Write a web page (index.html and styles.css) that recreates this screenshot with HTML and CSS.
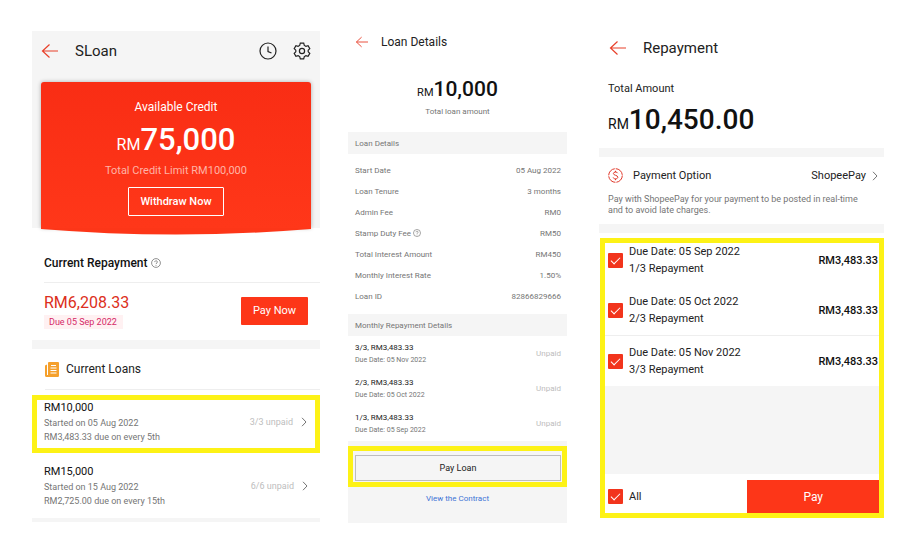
FILE: index.html
```html
<!DOCTYPE html>
<html lang="en">

<head>
  <meta charset="UTF-8">
  <meta name="viewport" content="width=device-width, initial-scale=1.0">
  <title>SLoan</title>
  <link rel="stylesheet" href="styles.css">
</head>

<body>
  <main class="screens">

    <!-- SLoan home -->
    <section class="screen home">
      <div class="hero">
        <header class="topbar">
          <button class="icon-btn" aria-label="Back">
            <svg class="back" viewBox="0 0 18 16"><path d="M8.5 1.5 1.5 8l7 6.5M1.5 8H17" /></svg>
          </button>
          <h1>SLoan</h1>
          <button class="icon-btn" aria-label="History">
            <svg class="tool" viewBox="0 0 18 18"><circle cx="9" cy="9" r="8" /><path d="M9 4.5V9.5l3.5 1.5" /></svg>
          </button>
          <button class="icon-btn" aria-label="Settings">
            <svg class="tool" viewBox="0 0 18 18"><path d="M7.3 1.2h3.4l.6 2.2 1.6.9 2.2-.6 1.7 2.9-1.6 1.6v1.6l1.6 1.6-1.7 2.9-2.2-.6-1.6.9-.6 2.2H7.3l-.6-2.2-1.6-.9-2.2.6-1.7-2.9 1.6-1.6V8.2L1.2 6.6l1.7-2.9 2.2.6 1.6-.9z" /><circle cx="9" cy="9" r="2.6" /></svg>
          </button>
        </header>
        <div class="credit">
          <p class="credit-label">Available Credit</p>
          <p class="credit-amount"><small>RM</small>75,000</p>
          <p class="credit-limit">Total Credit Limit RM100,000</p>
          <button class="withdraw">Withdraw Now</button>
        </div>
      </div>
      <svg class="curve" viewBox="0 0 270 7" preserveAspectRatio="none"><path d="M0 0h270v1Q135 12 0 1z" /></svg>

      <h2 class="repay-title">Current Repayment
        <svg class="help" viewBox="0 0 10 10"><circle cx="5" cy="5" r="4.4" /><path d="M3.7 4.1c0-1.8 2.7-1.7 2.7-.1C6.4 5 5 5 5 6.1M5 7v.8" /></svg>
      </h2>
      <div class="repay">
        <div>
          <p class="repay-amount">RM6,208.33</p>
          <span class="due">Due 05 Sep 2022</span>
        </div>
        <button class="pay-now">Pay Now</button>
      </div>
      <div class="divider"></div>

      <h2 class="loans-title">
        <svg class="book" viewBox="0 0 14 15"><path class="book-bg" d="M0 3.500 2 2.500v10.500h11.500v2H1.500Q0 15 0 13.500z" /><rect class="book-bg" x="3" y="0" width="11" height="14.500" rx="1" /><path class="book-line" d="M6 3.500h5M5.500 6h6M5.500 8.500h6M5.500 11h6" /></svg>
        Current Loans
      </h2>
      <a class="loan marked" href="#">
        <span class="loan-info"><b>RM10,000</b>Started on 05 Aug 2022<br>RM3,483.33 due on every 5th</span>
        <span class="loan-state">3/3 unpaid</span>
        <svg class="chevron" viewBox="0 0 6 10"><path d="m1 .8 4 4.200-4 4.200" /></svg>
      </a>
      <a class="loan" href="#">
        <span class="loan-info"><b>RM15,000</b>Started on 15 Aug 2022<br>RM2,725.00 due on every 15th</span>
        <span class="loan-state">6/6 unpaid</span>
        <svg class="chevron" viewBox="0 0 6 10"><path d="m1 .8 4 4.200-4 4.200" /></svg>
      </a>
      <div class="divider thin"></div>
    </section>

    <!-- Loan details -->
    <section class="screen details">
      <header class="topbar">
        <button class="icon-btn" aria-label="Back">
          <svg class="back" viewBox="0 0 18 16"><path d="M8.5 1.5 1.5 8l7 6.5M1.5 8H17" /></svg>
        </button>
        <h1>Loan Details</h1>
      </header>
      <p class="total"><small>RM</small>10,000</p>
      <p class="total-label">Total loan amount</p>

      <h2 class="bar">Loan Details</h2>
      <dl class="facts">
        <div><dt>Start Date</dt><dd>05 Aug 2022</dd></div>
        <div><dt>Loan Tenure</dt><dd>3 months</dd></div>
        <div><dt>Admin Fee</dt><dd>RM0</dd></div>
        <div>
          <dt>Stamp Duty Fee
            <svg class="help" viewBox="0 0 10 10"><circle cx="5" cy="5" r="4.4" /><path d="M3.7 4.1c0-1.8 2.7-1.7 2.7-.1C6.4 5 5 5 5 6.1M5 7v.8" /></svg>
          </dt>
          <dd>RM50</dd>
        </div>
        <div><dt>Total Interest Amount</dt><dd>RM450</dd></div>
        <div><dt>Monthly Interest Rate</dt><dd>1.50%</dd></div>
        <div><dt>Loan ID</dt><dd>82866829666</dd></div>
      </dl>

      <h2 class="bar">Monthly Repayment Details</h2>
      <ul class="months">
        <li><span><b>3/3, RM3,483.33</b>Due Date: 05 Nov 2022</span><em>Unpaid</em></li>
        <li><span><b>2/3, RM3,483.33</b>Due Date: 05 Oct 2022</span><em>Unpaid</em></li>
        <li><span><b>1/3, RM3,483.33</b>Due Date: 05 Sep 2022</span><em>Unpaid</em></li>
      </ul>
      <footer class="actions">
        <div class="marked"><button class="pay-loan">Pay Loan</button></div>
        <a class="contract" href="#">View the Contract</a>
      </footer>
    </section>

    <!-- Repayment -->
    <section class="screen repayment">
      <header class="topbar">
        <button class="icon-btn" aria-label="Back">
          <svg class="back" viewBox="0 0 18 16"><path d="M8.5 1.5 1.5 8l7 6.5M1.5 8H17" /></svg>
        </button>
        <h1>Repayment</h1>
      </header>
      <p class="amount-label">Total Amount</p>
      <p class="amount"><small>RM</small>10,450.00</p>
      <div class="divider"></div>

      <a class="option" href="#">
        <svg class="coin" viewBox="0 0 15 15"><circle cx="7.5" cy="7.5" r="6.8" stroke-dasharray="9.700 1" /><path d="M9.700 5.200C9.300 3.600 5.400 3.500 5.400 5.500c0 2.200 4.400 1.400 4.400 3.700 0 2.200-4.200 2.200-4.600.3M7.500 2.800v1.300M7.500 10.900v1.300" /></svg>
        <span class="option-name">Payment Option</span>
        <span>ShopeePay</span>
        <svg class="chevron" viewBox="0 0 6 10"><path d="m1 .8 4 4.200-4 4.200" /></svg>
      </a>
      <p class="note">Pay with ShopeePay for your payment to be posted in real-time and to avoid late charges.</p>
      <div class="divider"></div>

      <div class="marked picker">
        <label class="due-row">
          <input type="checkbox" class="check" checked>
          <span>Due Date: 05 Sep 2022<br>1/3 Repayment</span>
          <b>RM3,483.33</b>
        </label>
        <label class="due-row">
          <input type="checkbox" class="check" checked>
          <span>Due Date: 05 Oct 2022<br>2/3 Repayment</span>
          <b>RM3,483.33</b>
        </label>
        <label class="due-row">
          <input type="checkbox" class="check" checked>
          <span>Due Date: 05 Nov 2022<br>3/3 Repayment</span>
          <b>RM3,483.33</b>
        </label>
        <div class="blank"></div>
        <footer class="pay-bar">
          <label class="all"><input type="checkbox" class="check" checked>All</label>
          <button class="pay">Pay</button>
        </footer>
      </div>
    </section>

  </main>
</body>

</html>
```
FILE: styles.css
```css
:root {
  --red: #fd3618;
  --grey: #f5f5f5;
  --line: #eeeeee;
  --yellow: #fdf216;
  --text: #222222;
  --muted: #757575;
  --faint: #bdbdbd;
}

* {
  box-sizing: border-box;
}

body {
  margin: 0;
  background-color: white;
  color: var(--text);
  font-family: Roboto, "Liberation Sans", sans-serif;
  font-size: 11px;
}

h1,
h2,
p,
dl,
dd,
ul {
  margin: 0;
  padding: 0;
  font-weight: 400;
}

ul {
  list-style: none;
}

a {
  color: inherit;
  text-decoration: none;
}

button {
  padding: 0;
  border: none;
  background: none;
  font-family: inherit;
  cursor: pointer;
}

svg {
  display: block;
  flex: none;
  fill: none;
}

.screens {
  display: flex;
  align-items: flex-start;
  padding: 31px 20px 28px 32px;
}

.screen {
  min-width: 0;
}

.home {
  flex: 288 1 0;
}

.details {
  flex: 219 1 0;
  margin-left: 28px;
}

.repayment {
  flex: 285 1 0;
  margin-left: 32px;
}

/* shared parts */
.topbar {
  display: flex;
  align-items: center;
  gap: 16px;
}

.topbar h1 {
  flex: 1;
  font-size: 15px;
  line-height: 20px;
}

.back {
  width: 18px;
  height: 16px;
  stroke: #e8402a;
  stroke-width: 1.2;
}

.tool {
  width: 18px;
  height: 18px;
  stroke: #222222;
  stroke-width: 1.2;
}

.help {
  display: inline-block;
  width: 10px;
  height: 10px;
  stroke: var(--muted);
  stroke-width: 0.8;
  vertical-align: -1px;
}

.chevron {
  width: 6px;
  height: 10px;
  stroke: #757575;
}

.divider {
  height: 9px;
  background-color: var(--grey);
}

.divider.thin {
  height: 4px;
}

.marked {
  border: 5px solid var(--yellow);
}

/* home */
.hero {
  padding: 0 9px;
  background-color: var(--grey);
}

.hero .topbar {
  height: 51px;
  padding-bottom: 11px;
}

.credit {
  display: flex;
  flex-direction: column;
  align-items: center;
  padding: 16px 0 12px;
  border-radius: 3px 3px 0 0;
  background-color: var(--red);
  background-image: linear-gradient(#f92d14, #ff3719);
  box-shadow: 0 0 4px rgba(0, 0, 0, 0.3);
  color: white;
}

.credit-label {
  font-size: 12px;
  line-height: 18px;
}

.credit-amount {
  margin-top: 6px;
  font-size: 31px;
  font-weight: 500;
  line-height: 36px;
}

.credit-amount small {
  font-size: 16px;
  font-weight: 400;
}

.credit-limit {
  color: #ffb3a6;
  font-size: 11px;
  line-height: 16px;
}

.withdraw {
  width: 96px;
  height: 29px;
  margin-top: 8px;
  border: 1px solid white;
  border-radius: 1px;
  color: white;
  font-size: 11px;
  font-weight: 500;
}

.curve {
  width: calc(100% - 18px);
  height: 7px;
  margin: 0 9px;
  fill: #fd3618;
}

.repay-title {
  margin-left: 12px;
  padding: 19px 0 10px;
  border-bottom: 1px solid var(--line);
  color: #111111;
  font-size: 12px;
  font-weight: 500;
  line-height: 18px;
}

.repay {
  display: flex;
  align-items: center;
  justify-content: space-between;
  height: 57px;
  padding: 0 12px 2px;
}

.repay-amount {
  color: #dc2f20;
  font-size: 16px;
  line-height: 20px;
}

.due {
  display: block;
  width: fit-content;
  margin-top: 2px;
  padding: 0 6px 0 5px;
  background-color: #fff1f2;
  color: #d52a68;
  font-size: 9px;
  line-height: 14px;
}

.pay-now {
  width: 67px;
  height: 28px;
  border-radius: 1px;
  background-color: var(--red);
  color: white;
  font-size: 11px;
}

.loans-title {
  display: flex;
  align-items: center;
  gap: 7px;
  height: 41px;
  margin-left: 13px;
  border-bottom: 1px solid var(--line);
  font-size: 12px;
}

.book {
  width: 14px;
  height: 15px;
}

.book-bg {
  fill: #f5a02c;
}

.book-line {
  stroke: white;
}

.loan {
  display: flex;
  align-items: center;
  gap: 8px;
  margin-top: 5px;
  padding: 1px 12px 9px;
}

.loan.marked {
  padding: 0 8px 4px 7px;
}

.loan-info {
  flex: 1;
  color: var(--muted);
  font-size: 9px;
  line-height: 14px;
}

.loan-info b {
  display: block;
  color: #111111;
  font-size: 11px;
  font-weight: 400;
  line-height: 16px;
}

.loan + .loan {
  padding-top: 6px;
  padding-bottom: 10px;
}

.loan-state {
  color: var(--faint);
  font-size: 9px;
}

/* loan details */
.details .topbar {
  height: 21px;
  padding-left: 7px;
  gap: 12px;
}

.details .topbar h1 {
  font-size: 12px;
}

.details .back {
  width: 14px;
  height: 12px;
}

.total {
  padding-top: 25px;
  color: #111111;
  font-size: 21px;
  font-weight: 500;
  line-height: 24px;
  text-align: center;
}

.total small {
  font-size: 11px;
  font-weight: 400;
}

.total-label {
  padding-bottom: 13px;
  color: var(--muted);
  font-size: 8px;
  line-height: 14px;
  text-align: center;
}

.bar {
  padding: 2px 7px 0;
  background-color: var(--grey);
  color: var(--muted);
  font-size: 8px;
  line-height: 20px;
}

.facts {
  padding: 6px 6px 7px 7px;
  color: var(--muted);
  font-size: 8px;
  line-height: 21px;
}

.facts div {
  display: flex;
  justify-content: space-between;
}

.facts .help {
  width: 8px;
  height: 8px;
}

.months li {
  display: flex;
  align-items: center;
  justify-content: space-between;
  height: 35px;
  padding: 0 6px 0 7px;
  color: var(--muted);
  font-size: 7px;
  line-height: 12px;
}

.months b {
  display: block;
  color: var(--text);
  font-size: 8px;
  font-weight: 400;
}

.months em {
  color: var(--faint);
  font-size: 8px;
  font-style: normal;
}

.actions {
  padding: 5px 0 17px;
  background-color: var(--grey);
}

.actions .marked {
  padding: 4px 1px 1px 2px;
}

.pay-loan {
  display: block;
  width: 100%;
  height: 26px;
  border: 1px solid #bdbdbd;
  color: var(--text);
  font-size: 9px;
}

.contract {
  display: block;
  margin-top: 5px;
  color: #3d74d6;
  font-size: 8px;
  line-height: 14px;
  text-align: center;
}

/* repayment */
.repayment .topbar {
  height: 34px;
  padding-left: 10px;
}

.amount-label {
  padding: 16px 9px 0;
  line-height: 16px;
}

.amount {
  padding: 7px 9px 8px;
  color: #111111;
  font-size: 28px;
  font-weight: 500;
  line-height: 32px;
}

.amount small {
  font-size: 14px;
  font-weight: 400;
}

.option {
  display: flex;
  align-items: center;
  gap: 6px;
  height: 37px;
  padding: 0 6px 0 9px;
}

.option-name {
  flex: 1;
  margin-left: 4px;
}

.coin {
  width: 15px;
  height: 15px;
  stroke: #e0382a;
}

.note {
  padding: 0 20px 8px 9px;
  color: var(--muted);
  font-size: 9px;
  line-height: 11px;
}

.picker {
  margin: 5px 0 0 1px;
}

.due-row {
  display: flex;
  align-items: center;
  gap: 6px;
  padding: 8px 1px 8px 3px;
  line-height: 17px;
}

.due-row:first-child {
  padding-top: 0;
}

.due-row:nth-child(2) {
  border-bottom: 1px solid var(--line);
}

.due-row span {
  flex: 1;
}

.due-row b {
  color: #111111;
  font-weight: 500;
}

.check {
  display: flex;
  align-items: center;
  justify-content: center;
  flex: none;
  width: 15px;
  height: 15px;
  margin: 0;
  border-radius: 1px;
  appearance: none;
  background-color: #dddddd;
}

.check:checked {
  background-color: #f2341c;
}

.check:checked::before {
  content: "";
  width: 8px;
  height: 4px;
  margin-bottom: 2px;
  border: solid white;
  border-width: 0 0 1px 1px;
  transform: rotate(-45deg);
}

.blank {
  height: 88px;
  background-color: var(--grey);
}

.pay-bar {
  display: flex;
  padding-top: 6px;
}

.all {
  display: flex;
  flex: 141;
  align-items: center;
  gap: 6px;
  padding-left: 3px;
}

.pay {
  flex: 133;
  height: 33px;
  background-color: var(--red);
  color: white;
  font-size: 12px;
}
```
